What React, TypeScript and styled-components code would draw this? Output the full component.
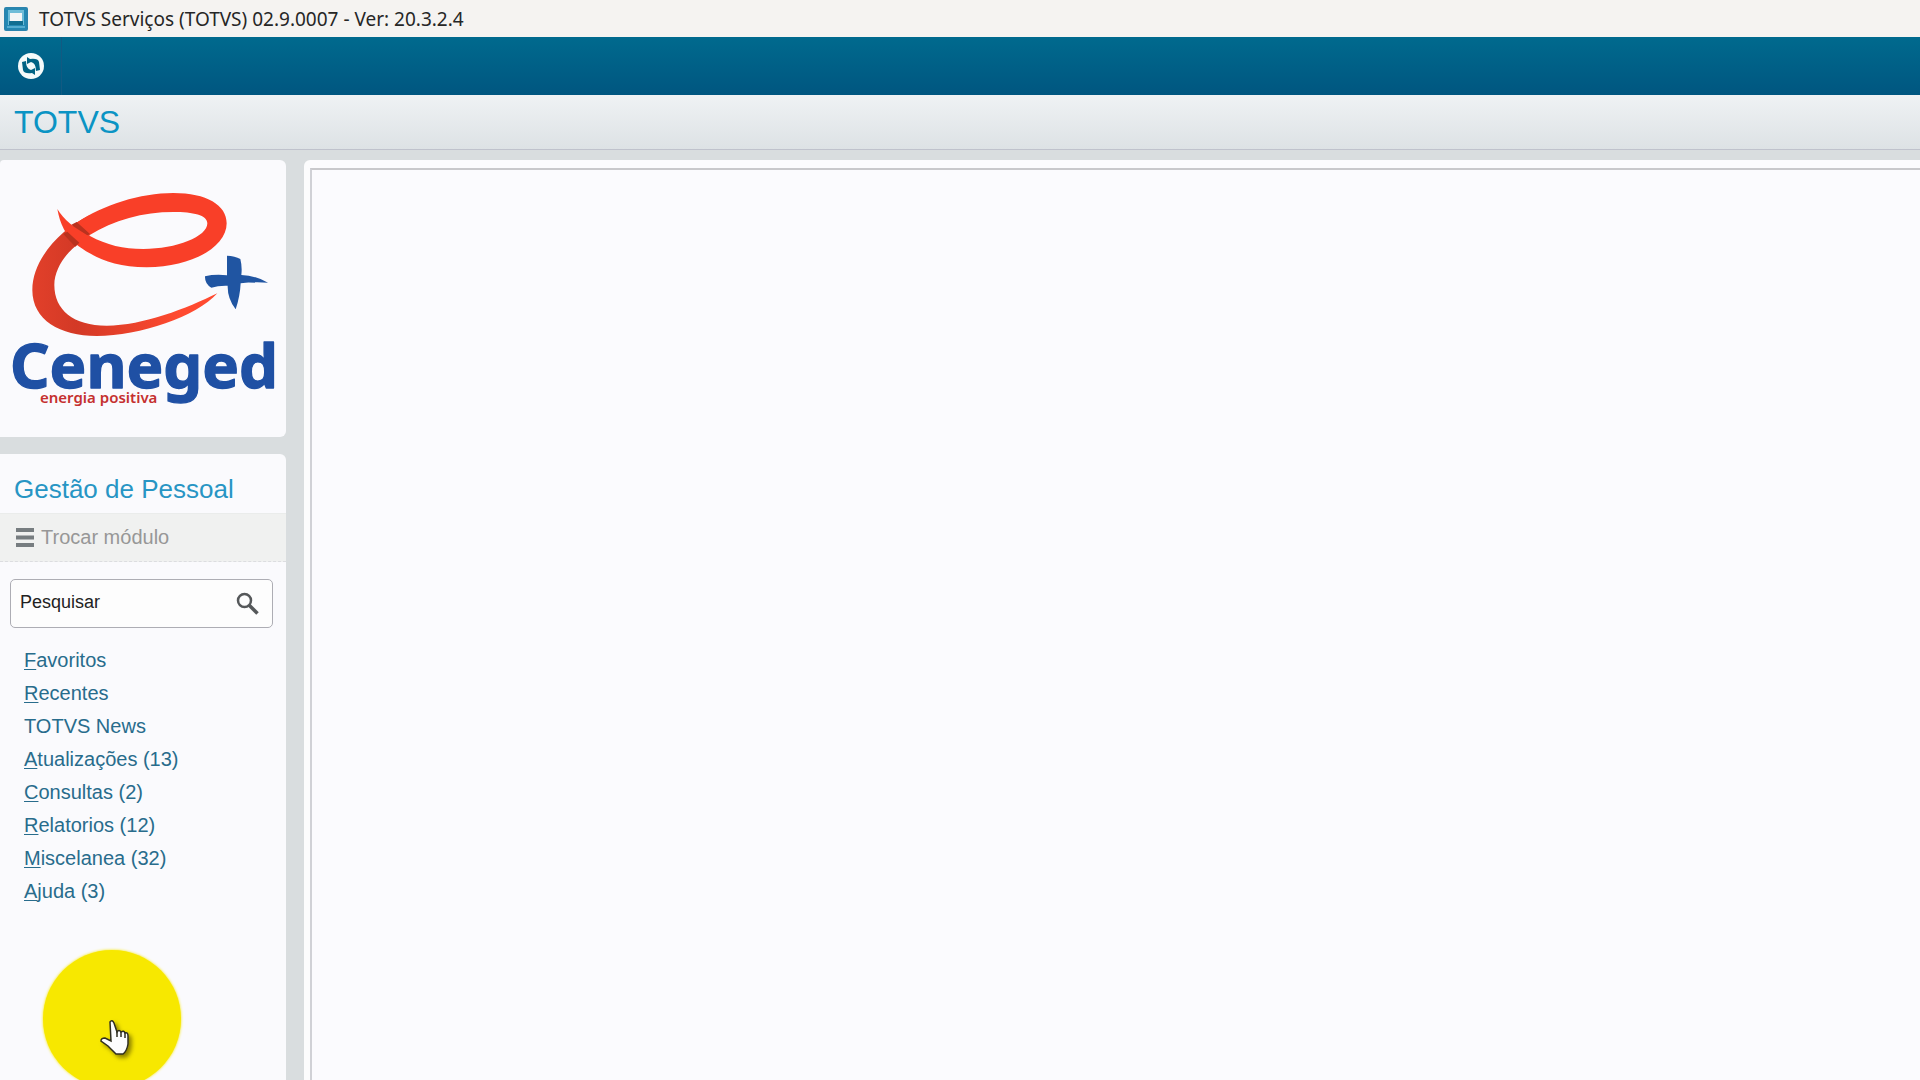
import React from "react";
import styled, { createGlobalStyle } from "styled-components";

const Global = createGlobalStyle`
  * { box-sizing: border-box; }
  body { margin: 0; background: #d9dddf; font-family: "Liberation Sans", Arial, sans-serif; }
`;

const Window = styled.div`
  position: relative;
  display: flex;
  flex-direction: column;
  min-height: 100vh;
  overflow: hidden;
`;

const TitleBar = styled.div`
  display: flex;
  align-items: center;
  gap: 11px;
  height: 37px;
  padding: 0 4px;
  background: #f5f3f1;
  color: #262626;
  font: 19px "Noto Sans", "Open Sans", sans-serif;
`;

const Toolbar = styled.nav`
  display: flex;
  height: 58px;
  background: linear-gradient(#006a8e, #005680);
`;

const ToolButton = styled.button`
  display: flex;
  align-items: center;
  justify-content: center;
  width: 62px;
  padding: 0;
  border: 0;
  border-right: 1px solid #125a82;
  background: none;
`;

const Header = styled.header`
  display: flex;
  align-items: center;
  height: 55px;
  padding: 0 14px;
  border-bottom: 1px solid #bfc2cc;
  background: linear-gradient(#eff2f4, #dde2e5);
`;

const Brand = styled.h1`
  margin: 0;
  color: #0b94c4;
  font-size: 32px;
  font-weight: 400;
  line-height: 40px;
`;

const Body = styled.div`
  display: flex;
  flex: 1;
  gap: 18px;
  padding-top: 10px;
`;

const Sidebar = styled.aside`
  display: flex;
  flex-direction: column;
  flex: 0 0 286px;
  min-width: 0;
  gap: 17px;
`;

const Panel = styled.section<{ $grow?: boolean }>`
  flex: ${(p) => (p.$grow ? "1" : "none")};
  border-radius: ${(p) => (p.$grow ? "0 6px 0 0" : "4px 6px 6px 0")};
  background: #fafafd;
`;

const Logo = styled.svg`
  display: block;
  width: 286px;
  height: 277px;
`;

const ModuleName = styled.h2`
  margin: 0;
  padding: 19px 14px 8px;
  color: #2795c4;
  font-size: 26px;
  font-weight: 400;
  line-height: 32px;
`;

const SwitchModule = styled.button`
  display: flex;
  align-items: center;
  gap: 7px;
  width: 100%;
  height: 49px;
  padding: 0 16px;
  border: 0;
  border-top: 1px solid #eaeceb;
  border-bottom: 1px dashed #dcdde0;
  background: #f0f1f0;
  color: #979797;
  font: 20px "Liberation Sans", Arial, sans-serif;
`;

const SearchBox = styled.form`
  display: flex;
  align-items: center;
  height: 49px;
  margin: 17px 13px 16px 10px;
  padding: 0 13px 0 9px;
  border: 1px solid #adadb4;
  border-radius: 5px;
  background: #fdfdfd;
`;

const SearchInput = styled.input`
  flex: 1;
  min-width: 0;
  padding: 0 0 2px;
  border: 0;
  outline: 0;
  background: none;
  color: #222;
  font: 18px "Liberation Sans", Arial, sans-serif;
  &::placeholder { color: #222; opacity: 1; }
`;

const SearchButton = styled.button`
  display: flex;
  padding: 0;
  border: 0;
  background: none;
`;

const Menu = styled.ul`
  margin: 0;
  padding: 0 24px;
  list-style: none;
`;

const MenuLink = styled.a`
  display: block;
  color: #286c8c;
  font-size: 20px;
  line-height: 33px;
  text-decoration: none;
`;

const Key = styled.span`
  text-decoration: underline;
  text-decoration-thickness: 1px;
  text-underline-offset: 2px;
  text-decoration-skip-ink: none;
`;

const Workspace = styled.main`
  display: flex;
  flex: 1;
  padding: 8px 0 0 6px;
  border-radius: 6px 0 0 0;
  background: #fcfcfd;
`;

const Canvas = styled.div`
  flex: 1;
  border-top: 2px solid #c9c9cb;
  border-left: 2px solid #d0d1d6;
  background: #fbfbfe;
`;

const Spotlight = styled.div`
  position: absolute;
  left: 43px;
  top: 950px;
  width: 138px;
  height: 138px;
  border-radius: 50%;
  background: #f7e800;
  box-shadow: 0 0 3px #f7e800;
  pointer-events: none;
`;

const Pointer = styled.svg`
  position: absolute;
  left: 53px;
  top: 65px;
  filter: drop-shadow(3px 3px 2px rgba(70, 60, 0, 0.6));
`;

const items = [
  { key: "F", rest: "avoritos" },
  { key: "R", rest: "ecentes" },
  { key: "", rest: "TOTVS News" },
  { key: "A", rest: "tualizações (13)" },
  { key: "C", rest: "onsultas (2)" },
  { key: "R", rest: "elatorios (12)" },
  { key: "M", rest: "iscelanea (32)" },
  { key: "A", rest: "juda (3)" },
];

function AppIcon() {
  return (
    <svg width="24" height="24" viewBox="0 0 24 24" aria-hidden="true">
      <rect x="1" y="1" width="22" height="22" rx="1" fill="#2389b4" stroke="#2a84ae" strokeWidth="2" />
      <path d="M4 3h16v15H4z" fill="#6fbcd8" />
      <rect x="6" y="6" width="12" height="8" fill="#f3f5f6" />
      <path d="M5 14h14v4H5z" fill="#126e91" />
      <path d="M3 20h18" stroke="#56acd0" strokeWidth="2" />
    </svg>
  );
}

function RefreshIcon() {
  return (
    <svg width="26" height="26" viewBox="0 0 26 26" aria-hidden="true">
      <circle cx="13" cy="13" r="13" fill="#f4fafa" />
      <path d="M9 4L12 6Q20 5 21 9L22 17L18 18Q18 10 13 9L9 11Z" fill="#006384" />
      <path d="M17 22L14 20Q6 21 5 17L4 9L8 8Q8 16 13 17L17 15Z" fill="#006384" />
    </svg>
  );
}

function CompanyLogo() {
  return (
    <Logo viewBox="0 30 858 831" role="img" aria-label="Ceneged energia positiva">
      <defs>
        <linearGradient id="sweep" x1="0" y1="0.6" x2="0.8" y2="0.6">
          <stop offset="0" stopColor="#e2402a" />
          <stop offset="0.3" stopColor="#d33926" />
          <stop offset="1" stopColor="#ff4a30" />
        </linearGradient>
      </defs>
      <path d="M270 195C185 235 97 325 97 420C97 510 180 558 290 558C420 558 590 500 652 430C560 475 430 527 320 527C220 527 163 480 163 405C163 355 200 305 240 278L270 255Z" fill="url(#sweep)" />
      <path d="M230 218C310 165 420 129 520 129C620 129 680 165 680 220C680 290 580 350 440 352C340 352 280 320 235 288C195 258 180 220 172 177C190 207 225 238 270 258C320 285 370 297 430 297C530 297 622 260 622 220C622 195 580 186 520 186C430 186 340 210 268 256Z" fill="#f93f28" />
      <path d="M230 216 270 252 262 256 214 224ZM190 252 202 245 238 278 226 290Z" fill="#b9321f" />
      <path d="M681 317Q705 318 721 327Q727 350 724 375Q765 376 804 398Q763 394 722 400Q720 440 707 478Q682 445 683 407Q655 406 634 413Q614 402 615 379Q645 372 681 376Z" fill="#2055a2" />
      <text x="30" y="714" fontFamily="Noto Sans, sans-serif" fontWeight="700" fontSize="185" fill="#1f50a4" stroke="#1f50a4" strokeWidth="4" strokeLinejoin="round">Ceneged</text>
      <text x="120" y="760" fontFamily="Noto Sans, sans-serif" fontWeight="600" fontSize="45" fill="#c5302f">energia positiva</text>
    </Logo>
  );
}

export default function App() {
  return (
    <Window>
      <Global />
      <TitleBar>
        <AppIcon />
        <span>TOTVS Serviços (TOTVS) 02.9.0007 - Ver: 20.3.2.4</span>
      </TitleBar>
      <Toolbar>
        <ToolButton type="button" aria-label="Atualizar">
          <RefreshIcon />
        </ToolButton>
      </Toolbar>
      <Header>
        <Brand>TOTVS</Brand>
      </Header>
      <Body>
        <Sidebar>
          <Panel>
            <CompanyLogo />
          </Panel>
          <Panel $grow>
            <ModuleName>Gestão de Pessoal</ModuleName>
            <SwitchModule type="button">
              <svg width="18" height="19" viewBox="0 0 18 19" aria-hidden="true">
                <path d="M0 2h18M0 9.500h18M0 17h18" stroke="#777d80" strokeWidth="4" />
              </svg>
              Trocar módulo
            </SwitchModule>
            <SearchBox>
              <SearchInput type="text" placeholder="Pesquisar" aria-label="Pesquisar" />
              <SearchButton type="button" aria-label="Buscar">
                <svg width="23" height="23" viewBox="0 0 23 23" fill="none" stroke="#55585a" aria-hidden="true">
                  <circle cx="8.500" cy="8.500" r="6.500" strokeWidth="2.500" />
                  <path d="M13 13l8.500 8.500" strokeWidth="3.500" />
                </svg>
              </SearchButton>
            </SearchBox>
            <Menu>
              {items.map((item) => (
                <li key={item.key + item.rest}>
                  <MenuLink href="#">
                    {item.key && <Key>{item.key}</Key>}
                    {item.rest}
                  </MenuLink>
                </li>
              ))}
            </Menu>
          </Panel>
        </Sidebar>
        <Workspace>
          <Canvas />
        </Workspace>
      </Body>
      <Spotlight>
        <Pointer width="40" height="44" viewBox="0 0 40 44" aria-hidden="true">
          <path
            d="M14 7Q16 4 18 8L21 17Q23 14 25 17Q28 15 29 18Q32 17 32 21V29Q31 36 27 39H20Q16 35 12 31L5 26Q5 23 9 23L15 26Z"
            fill="#fdfdfd"
            stroke="#302f22"
            strokeWidth="1.500"
          />
          <path d="M21 16v6M25 17v5M29 18v5" stroke="#302f22" strokeWidth="1.500" />
        </Pointer>
      </Spotlight>
    </Window>
  );
}
